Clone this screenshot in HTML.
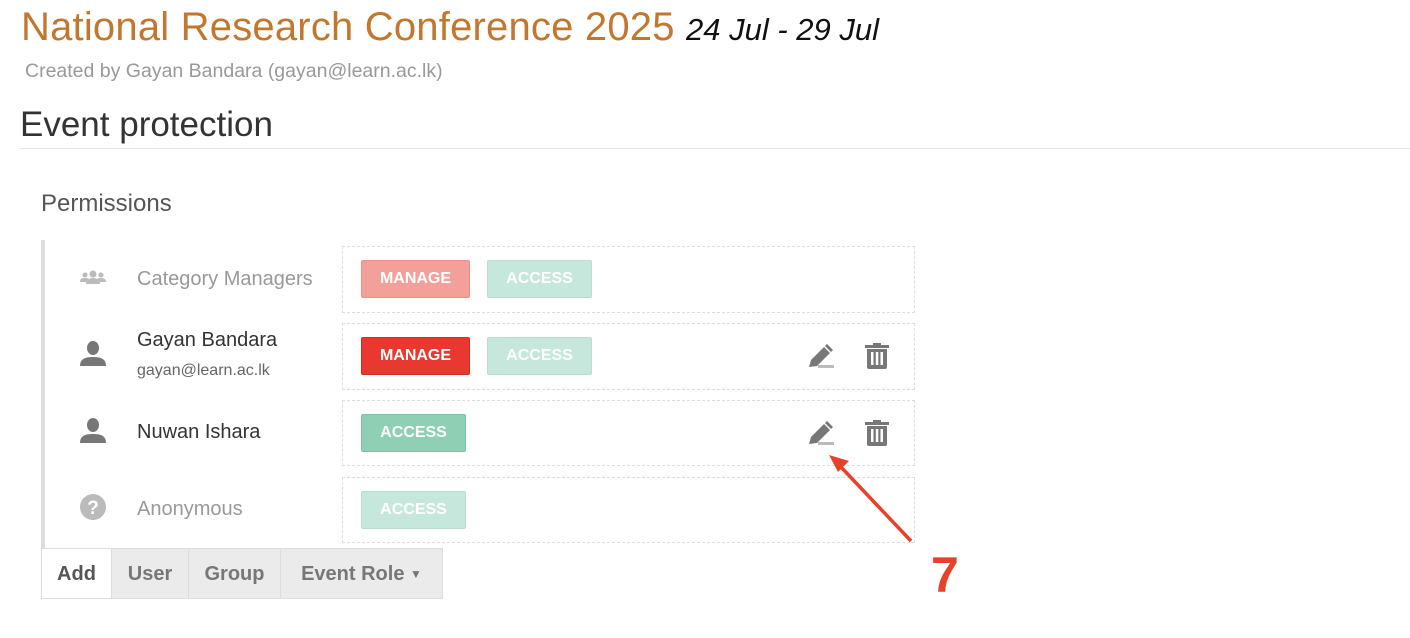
<!DOCTYPE html>
<html><head><style>
body{margin:0;width:1410px;height:638px;background:#fff;font-family:"Liberation Sans",sans-serif;position:relative;overflow:hidden}
.a{position:absolute;white-space:nowrap}
.box{position:absolute;left:342px;width:573px;border:1px dashed #ddd;box-sizing:border-box}
.btn{position:absolute;height:38px;box-sizing:border-box;border-radius:2px;color:#fff;font-weight:bold;font-size:16px;text-align:center;line-height:36px}
.name{position:absolute;left:137px;font-size:20px}
.seg{position:absolute;top:548px;height:51px;line-height:51px;text-align:center;font-weight:bold;font-size:20px;color:#777;background:#ebebeb;border:1px solid #ddd;box-sizing:border-box}
</style></head><body>
<div class="a" style="left:21px;top:5px;font-size:40px;color:#c2772f;letter-spacing:0.2px">National Research Conference 2025 <span style="font-size:31px;color:#111;font-style:italic;letter-spacing:0">24 Jul - 29 Jul</span></div>
<div class="a" style="left:25px;top:60px;font-size:19.5px;color:#999">Created by Gayan Bandara (gayan@learn.ac.lk)</div>
<div class="a" style="left:20px;top:105px;font-size:35px;color:#333">Event protection</div>
<div class="a" style="left:20px;top:148px;width:1390px;height:1px;background:#e5e5e5"></div>
<div class="a" style="left:41px;top:190px;font-size:24px;color:#555">Permissions</div>
<div class="a" style="left:41px;top:240px;width:4px;height:308px;background:#ddd"></div>

<div class="box" style="top:246px;height:67px"></div>
<div class="box" style="top:323px;height:67px"></div>
<div class="box" style="top:400px;height:66px"></div>
<div class="box" style="top:477px;height:66px"></div>

<svg class="a" style="left:79px;top:269px" width="28" height="18" viewBox="0 0 28 18"><g fill="#bbb"><circle cx="14" cy="5" r="3.5"/><path d="M7 15c0-4 3-6 7-6s7 2 7 6z"/><circle cx="6" cy="6" r="2.5"/><path d="M1 13c0-3 2-4 5-4s4 1 4 2v2z"/><circle cx="22" cy="6" r="2.5"/><path d="M27 13c0-3-2-4-5-4s-4 1-4 2v2z"/></g></svg>
<div class="name" style="top:268px;color:#999">Category Managers</div>
<div class="btn" style="left:361px;top:260px;width:109px;background:#f4a09a;border:1px solid #ef8f88">MANAGE</div>
<div class="btn" style="left:487px;top:260px;width:105px;background:#c6e8dc;border:1px solid #b6dfd0">ACCESS</div>

<svg class="a" style="left:79px;top:340px" width="28" height="26" viewBox="0 0 28 26"><g fill="#777"><ellipse cx="14" cy="8" rx="6" ry="7"/><path d="M1 26c0-7 5-9 13-9s13 2 13 9z"/></g></svg>
<div class="name" style="top:329px;color:#333">Gayan Bandara</div>
<div class="a" style="left:137px;top:362px;font-size:16px;color:#666">gayan@learn.ac.lk</div>
<div class="btn" style="left:361px;top:337px;width:109px;background:#e8382f;border:1px solid #d12d25">MANAGE</div>
<div class="btn" style="left:487px;top:337px;width:105px;background:#c6e8dc;border:1px solid #b6dfd0">ACCESS</div>

<svg class="a" style="left:79px;top:417px" width="28" height="26" viewBox="0 0 28 26"><g fill="#777"><ellipse cx="14" cy="8" rx="6" ry="7"/><path d="M1 26c0-7 5-9 13-9s13 2 13 9z"/></g></svg>
<div class="name" style="top:421px;color:#333">Nuwan Ishara</div>
<div class="btn" style="left:361px;top:414px;width:105px;background:#8fcfb4;border:1px solid #7cc2a5">ACCESS</div>

<svg class="a" style="left:79px;top:493px" width="28" height="28" viewBox="0 0 28 28"><circle cx="14" cy="14" r="13" fill="#bbb"/><text x="14" y="21" text-anchor="middle" font-family="Liberation Sans" font-weight="bold" font-size="19" fill="#fff">?</text></svg>
<div class="name" style="top:498px;color:#999">Anonymous</div>
<div class="btn" style="left:361px;top:491px;width:105px;background:#c6e8dc;border:1px solid #b6dfd0">ACCESS</div>

<svg class="a" style="left:807px;top:342px" width="28" height="28" viewBox="0 0 28 28"><path d="M2 25l2-7L17 5l6 6-13 13z" fill="#777"/><path d="M18 4l2-2 6 6-2 2z" fill="#777"/><rect x="11" y="23" width="16" height="3" fill="#bbb"/></svg>
<svg class="a" style="left:864px;top:342px" width="26" height="27" viewBox="0 0 26 27"><g fill="#777"><rect x="1" y="3" width="24" height="3"/><rect x="9" y="1" width="8" height="3"/><path d="M3 7h20v18a2 2 0 0 1-2 2H5a2 2 0 0 1-2-2z"/></g><g fill="#fff"><rect x="7" y="10" width="2.5" height="13"/><rect x="11.8" y="10" width="2.5" height="13"/><rect x="16.5" y="10" width="2.5" height="13"/></g></svg>
<svg class="a" style="left:807px;top:419px" width="28" height="28" viewBox="0 0 28 28"><path d="M2 25l2-7L17 5l6 6-13 13z" fill="#777"/><path d="M18 4l2-2 6 6-2 2z" fill="#777"/><rect x="11" y="23" width="16" height="3" fill="#bbb"/></svg>
<svg class="a" style="left:864px;top:419px" width="26" height="27" viewBox="0 0 26 27"><g fill="#777"><rect x="1" y="3" width="24" height="3"/><rect x="9" y="1" width="8" height="3"/><path d="M3 7h20v18a2 2 0 0 1-2 2H5a2 2 0 0 1-2-2z"/></g><g fill="#fff"><rect x="7" y="10" width="2.5" height="13"/><rect x="11.8" y="10" width="2.5" height="13"/><rect x="16.5" y="10" width="2.5" height="13"/></g></svg>

<div class="seg" style="left:41px;width:71px;background:#fff;color:#555">Add</div>
<div class="seg" style="left:111px;width:78px">User</div>
<div class="seg" style="left:188px;width:93px">Group</div>
<div class="seg" style="left:280px;width:163px">Event Role <span style="font-size:12px;vertical-align:2px">▼</span></div>

<svg class="a" style="left:0;top:0" width="1410" height="638"><line x1="911" y1="541" x2="840" y2="466" stroke="#e8412a" stroke-width="3.5"/><path d="M829 455l20 6-11 11z" fill="#e8412a"/></svg>
<div class="a" style="left:931px;top:546px;font-size:50px;font-weight:bold;color:#e8412a">7</div>
</body></html>
